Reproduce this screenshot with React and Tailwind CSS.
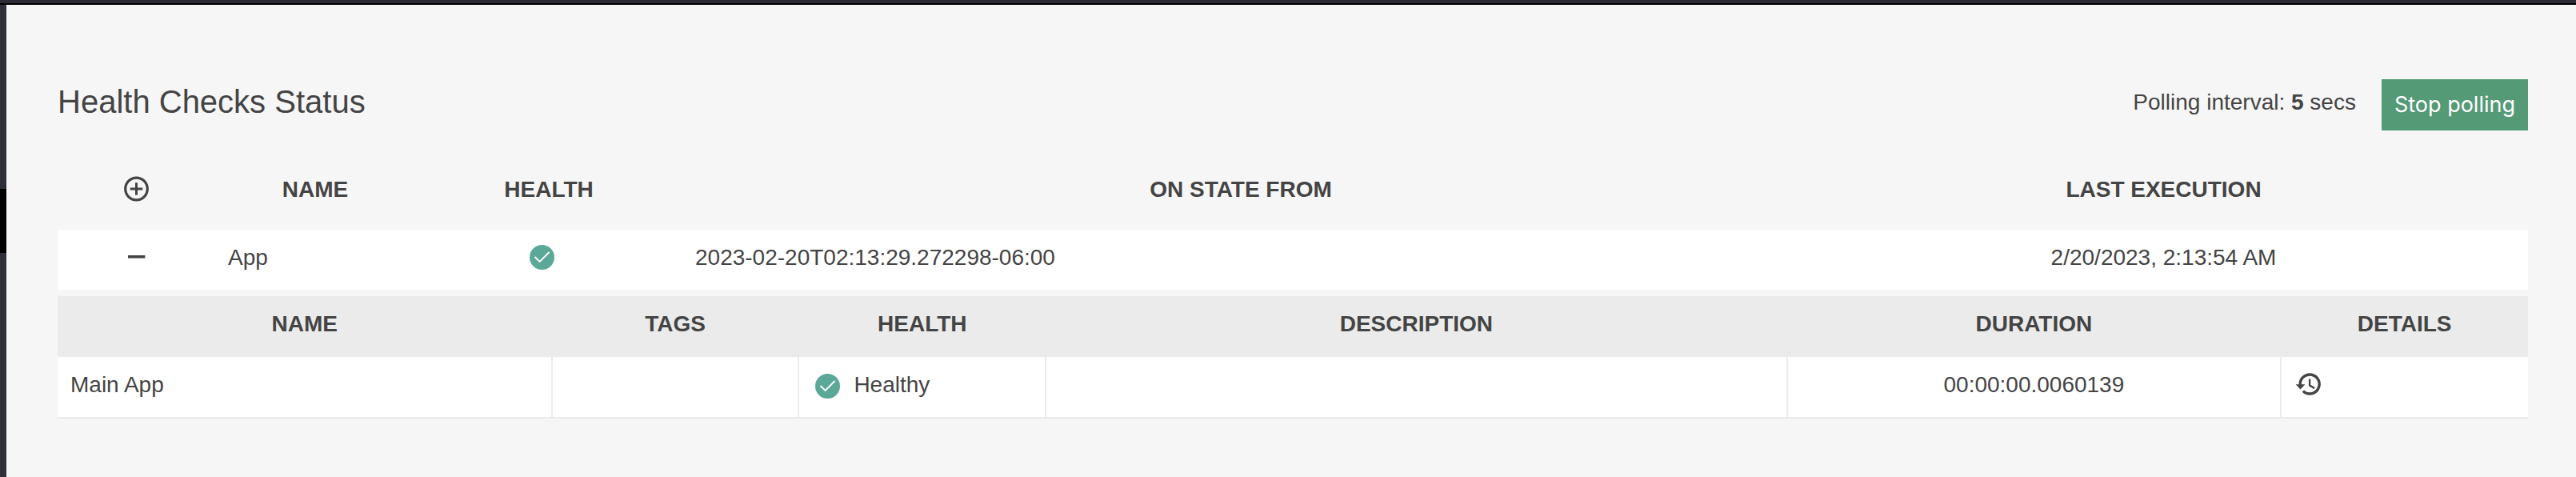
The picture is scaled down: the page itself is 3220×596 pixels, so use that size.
function HealthyIcon({ label }) {
  return (
    <svg viewBox="0 0 40 40" role="img" aria-label={label} className="size-10 shrink-0">
      <circle cx="19.5" cy="20.5" r="15.5" fill="#5ba898" />
      <path d="M10.5 20l6.2 6L28.5 14" fill="none" stroke="#fff" strokeWidth="1.8" />
    </svg>
  );
}

function ExpandIcon() {
  return (
    <svg viewBox="0 0 40 40" aria-hidden="true" className="size-10" fill="none" stroke="currentColor">
      <circle cx="19.5" cy="20" r="13.8" strokeWidth="3.2" />
      <path d="M19.5 12.2v15.6M11.7 20h15.6" strokeWidth="3" />
    </svg>
  );
}

function CollapseIcon() {
  return (
    <svg viewBox="0 0 40 40" aria-hidden="true" className="size-10">
      <path d="M9 18h21.4v3.6H9z" fill="currentColor" />
    </svg>
  );
}

function HistoryIcon() {
  return (
    <svg viewBox="0 0 40 40" aria-hidden="true" className="size-10" fill="none" stroke="currentColor">
      <path d="M7.2 21A12 12 0 1 1 10.8 28.6" strokeWidth="3.4" />
      <path d="M1.6 20.2h11.8L7.5 26.4z" fill="currentColor" stroke="none" />
      <path d="M19.1 13.4v8.1l6 3.6" strokeWidth="2.4" />
    </svg>
  );
}

const checks = [
  { name: "Main App", tags: "", health: "Healthy", description: "", duration: "00:00:00.0060139" },
];

export default function App() {
  return (
    <div className="flex min-h-screen flex-col bg-[#f6f6f6] font-['Liberation_Sans',Arial,sans-serif] text-[28px] leading-[42px] text-[#444]">
      <div className="h-[6px] border-b-2 border-black bg-[#2b2a35]" />
      <div className="flex flex-1">
        <div className="w-2 shrink-0 bg-[#2d3039] pt-[230px]">
          <div className="h-20 bg-black" />
        </div>
        <main className="flex-1 pt-[93px] pr-[60px] pl-16">
          <header className="flex items-start justify-between">
            <h1 className="text-[40px] leading-[56px]">Health Checks Status</h1>
            <div className="flex items-start gap-8">
              <p className="pt-2">
                Polling interval: <b>5</b> secs
              </p>
              <button type="button" className="h-16 bg-[#549a76] px-4 font-['Inter',sans-serif] text-[27px] text-white">
                Stop polling
              </button>
            </div>
          </header>

          <table className="mt-[39px] w-full table-fixed">
            <colgroup>
              <col className="w-[197px]" />
              <col className="w-[250px]" />
              <col className="w-[334px]" />
              <col />
              <col className="w-[911px]" />
            </colgroup>
            <thead>
              <tr className="h-[85px] align-top uppercase">
                <th className="pt-[14px]">
                  <button type="button" aria-label="Expand all" className="mx-auto block">
                    <ExpandIcon />
                  </button>
                </th>
                <th className="pt-[14px]">Name</th>
                <th className="pt-[14px]">Health</th>
                <th className="pt-[14px]">On state from</th>
                <th className="pt-[14px]">Last execution</th>
              </tr>
            </thead>
            <tbody>
              <tr className="h-[75px] bg-white align-top">
                <td className="px-4 pt-[14px]">
                  <button type="button" aria-label="Collapse App" className="mx-auto block">
                    <CollapseIcon />
                  </button>
                </td>
                <td className="px-4 pt-[14px]">App</td>
                <td className="px-4 pt-[14px]">
                  <div className="flex justify-center pr-4">
                    <HealthyIcon label="Healthy" />
                  </div>
                </td>
                <td className="px-4 pt-[14px]">2023-02-20T02:13:29.272298-06:00</td>
                <td className="px-4 pt-[14px] text-center">2/20/2023, 2:13:54 AM</td>
              </tr>
            </tbody>
          </table>

          <table className="mt-2 w-full table-fixed">
            <colgroup>
              <col className="w-[20%]" />
              <col className="w-[10%]" />
              <col className="w-[10%]" />
              <col className="w-[30%]" />
              <col className="w-[20%]" />
              <col className="w-[10%]" />
            </colgroup>
            <thead>
              <tr className="h-[76px] bg-[#ebebeb] align-top uppercase">
                <th className="pt-[14px]">Name</th>
                <th className="pt-[14px]">Tags</th>
                <th className="pt-[14px]">Health</th>
                <th className="pt-[14px]">Description</th>
                <th className="pt-[14px]">Duration</th>
                <th className="pt-[14px]">Details</th>
              </tr>
            </thead>
            <tbody>
              {checks.map((check) => (
                <tr key={check.name} className="h-[76px] border-b-2 border-[#ebebeb] bg-white align-top">
                  <td className="border-r-2 border-[#ebebeb] px-4 pt-[14px]">{check.name}</td>
                  <td className="border-r-2 border-[#ebebeb] px-4 pt-[14px]">{check.tags}</td>
                  <td className="border-r-2 border-[#ebebeb] px-4 pt-[14px]">
                    <div className="flex items-end gap-3">
                      <HealthyIcon label="" />
                      {check.health}
                    </div>
                  </td>
                  <td className="border-r-2 border-[#ebebeb] px-4 pt-[14px]">{check.description}</td>
                  <td className="border-r-2 border-[#ebebeb] px-4 pt-[14px] text-center">{check.duration}</td>
                  <td className="px-4 pt-[14px]">
                    <button type="button" aria-label="Show history" className="block">
                      <HistoryIcon />
                    </button>
                  </td>
                </tr>
              ))}
            </tbody>
          </table>
        </main>
      </div>
    </div>
  );
}
